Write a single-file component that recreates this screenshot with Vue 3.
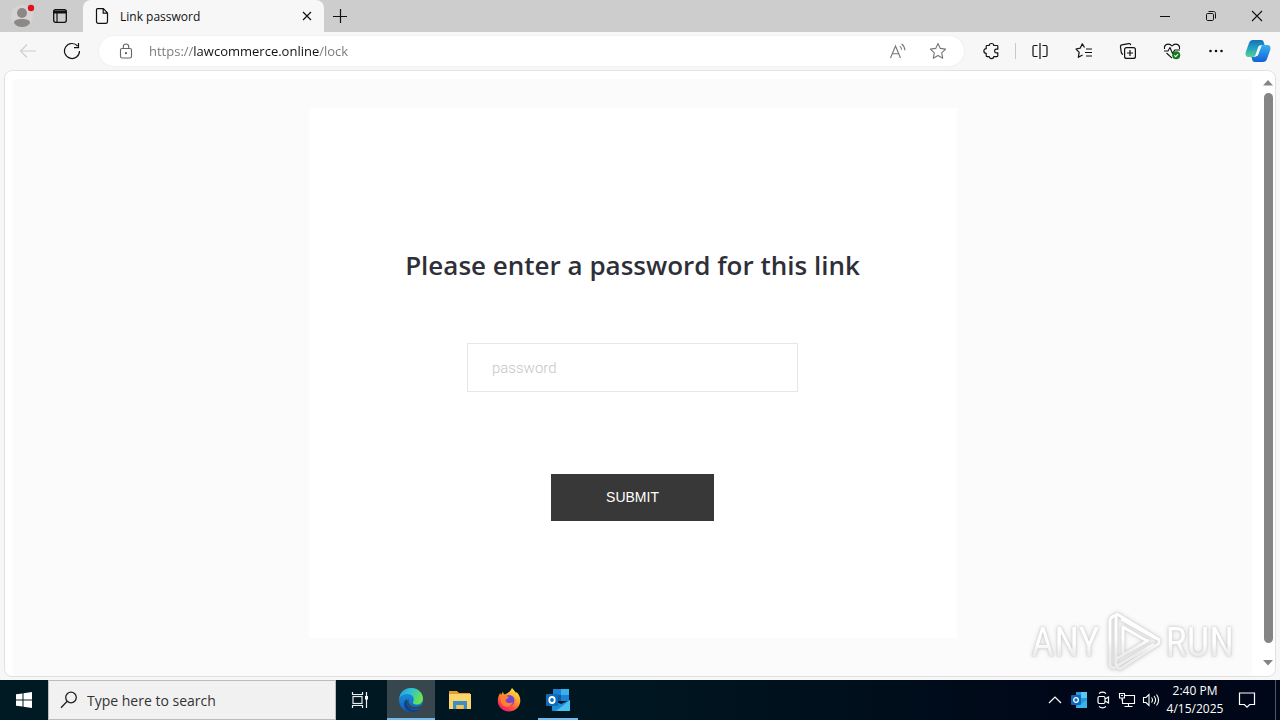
<template>
    <div class="desktop">
        <div class="browser">
            <header class="tab-strip">
                <button class="profile" aria-label="Profile">
                    <svg width="32" height="28" viewBox="0 0 32 28">
                        <circle cx="16" cy="14" r="11" fill="#d6d4d3" />
                        <circle cx="16" cy="11" r="5" fill="#8b8887" />
                        <path d="M8 21c0-3 3-4 8-4s8 1 8 4c-2 3-5 4-8 4s-6-1-8-4z" fill="#8b8887" />
                        <circle cx="25" cy="6" r="3.2" fill="#e0101c" />
                    </svg>
                </button>
                <button class="tab-actions" aria-label="Tab actions menu">
                    <svg width="16" height="16" viewBox="0 0 16 16">
                        <rect x="1.7" y="1.7" width="12.6" height="12.6" rx="2" fill="none" stroke="#111" stroke-width="1.3" />
                        <path d="M1.5 2.5h13v3h-13z" fill="#111" />
                        <path d="M5 5v9" stroke="#111" stroke-width="1.2" />
                    </svg>
                </button>
                <div class="tab">
                    <svg class="tab-icon" width="16" height="18" viewBox="0 0 16 18">
                        <path d="M3.5 1.6h5.8l4.2 4.3v8.600c0 1.100-.7 1.900-1.800 1.900H4.300c-1.100 0-1.800-.8-1.800-1.900V2.600c0-.6.4-1 1-1zM9.200 1.800v4.300h4.200" fill="none" stroke="#111" stroke-width="1.2" />
                    </svg>
                    <span class="tab-title">Link password</span>
                    <button class="tab-close" aria-label="Close tab">
                        <svg width="10" height="10" viewBox="0 0 10 10"><path d="M1 1l8 8M9 1L1 9" stroke="#111" stroke-width="1.2" /></svg>
                    </button>
                </div>
                <button class="new-tab" aria-label="New tab">
                    <svg width="16" height="16" viewBox="0 0 16 16"><path d="M8.5 1v14M1 8.500h14" stroke="#111" stroke-width="1.2" /></svg>
                </button>
                <div class="window-buttons">
                    <button aria-label="Minimize">
                        <svg width="12" height="12" viewBox="0 0 12 12"><path d="M1 6.500h10" stroke="#111" /></svg>
                    </button>
                    <button aria-label="Restore">
                        <svg width="12" height="12" viewBox="0 0 12 12" fill="none" stroke="#111">
                            <rect x="1.5" y="3.5" width="7" height="7" rx="1.2" />
                            <path d="M3.500 1.500h5c1.300 0 2 .7 2 2v5" />
                        </svg>
                    </button>
                    <button aria-label="Close">
                        <svg width="12" height="12" viewBox="0 0 12 12"><path d="M1 1l10 10M11 1L1 11" stroke="#111" stroke-width="1.1" /></svg>
                    </button>
                </div>
            </header>

            <nav class="toolbar">
                <button class="tool" aria-label="Back" disabled>
                    <svg width="18" height="16" viewBox="0 0 18 16" fill="none" stroke="#cdcdcd" stroke-width="1.1"><path d="M17 8H2M8 1.500L1.500 8 8 14.500" /></svg>
                </button>
                <button class="tool" aria-label="Refresh">
                    <svg width="18" height="18" viewBox="0 0 18 18" fill="none" stroke="#111" stroke-width="1.2">
                        <path d="M16.500 9A7.500 7.500 0 1 1 14.600 4M15.500 1v4.600H11" />
                    </svg>
                </button>
                <div class="address-bar">
                    <svg class="lock" width="14" height="16" viewBox="0 0 14 16" fill="none" stroke="#666" stroke-width="1.1">
                        <rect x="1.5" y="5.5" width="11" height="9.5" rx="1.6" />
                        <path d="M4.300 5.500V3.700a2.700 2.700 0 0 1 5.400 0v1.800" />
                        <circle cx="7" cy="10.2" r=".6" fill="#666" />
                    </svg>
                    <input v-model="address" class="address" type="text" aria-label="Address" spellcheck="false">
                    <button class="address-tool" aria-label="Read aloud">
                        <svg width="18" height="16" viewBox="0 0 18 16" fill="none" stroke="#767676" stroke-width="1.1">
                            <path d="M1.500 15L6.500 3l5 12M3.300 10.800h6.400M10.800 3.200c1.200 1 1.700 2 1.800 3.400M12.600 1c2.200 1.600 3.200 3.600 3.300 6.200" />
                        </svg>
                    </button>
                    <button class="address-tool" aria-label="Add to favorites">
                        <svg width="18" height="18" viewBox="0 0 18 18" fill="none" stroke="#767676" stroke-width="1.1" stroke-linejoin="round">
                            <path d="M9 1.500l2.300 4.900 5.300.7-3.900 3.700 1 5.400L9 13.600l-4.700 2.600 1-5.400L1.400 7.100l5.300-.7z" />
                        </svg>
                    </button>
                </div>
                <button class="tool" aria-label="Extensions">
                    <svg width="18" height="18" viewBox="0 0 18 18" fill="none" stroke="#111" stroke-width="1.2" stroke-linejoin="round">
                        <path d="M5 3.500h2.200C7.200.8 11.800.8 11.800 3.500H15c.5 0 .8.3.8.8v2.900h-1.500c-2.300 0-2.300 3.600 0 3.600h1.500v3c0 .5-.3.800-.8.800h-3.200c0 2.600-4.600 2.600-4.600 0H5c-.5 0-.8-.3-.8-.8v-2.500c-3.100 0-3.100-4.600 0-4.600V4.300c0-.5.3-.8.8-.8z" />
                    </svg>
                </button>
                <span class="divider"></span>
                <button class="tool" aria-label="Split screen">
                    <svg width="18" height="18" viewBox="0 0 18 18" fill="none" stroke="#111" stroke-width="1.2">
                        <path d="M6.500 3.500H3.200c-.8 0-1.200.4-1.200 1.200v8.600c0 .8.4 1.200 1.200 1.200h3.300M11.500 3.500h3.300c.8 0 1.200.4 1.200 1.200v8.600c0 .8-.4 1.200-1.200 1.200h-3.300M9 1v16" />
                    </svg>
                </button>
                <button class="tool" aria-label="Favorites">
                    <svg width="18" height="18" viewBox="0 0 18 18" fill="none" stroke="#111" stroke-width="1.2" stroke-linejoin="round">
                        <path d="M9.500 5.500L7.300 1.800 5.200 6.200 1 7l3.200 3.300-.9 5L7.600 13M11 7h6M10 10.500h7M11 14h6" />
                    </svg>
                </button>
                <button class="tool" aria-label="Collections">
                    <svg width="18" height="18" viewBox="0 0 18 18" fill="none" stroke="#111" stroke-width="1.2">
                        <path d="M4 12.500C2.800 12 2.600 11.500 2.300 10.500L1.500 5c-.2-1.200.3-2 1.500-2.200L9.500 1.600c1.200-.2 2 .3 2.200 1.500" />
                        <rect x="5.6" y="5.6" width="10.8" height="10.8" rx="2" />
                        <path d="M11 8v6M8 11h6" />
                    </svg>
                </button>
                <button class="tool" aria-label="Browser essentials">
                    <svg width="18" height="18" viewBox="0 0 18 18" fill="none" stroke="#111" stroke-width="1.1" stroke-linejoin="round">
                        <path d="M1.500 7C.8 2 6 .7 9 4c3-3.300 8.200-2 7.500 3M1 9h4l2-3.500 2.500 6L11.700 8H17M3.500 11L9 16.200" />
                        <circle cx="13.2" cy="13.2" r="4" fill="#137a1b" stroke="none" />
                        <path d="M11.300 13.300l1.400 1.400 2.400-2.700" stroke="#fff" />
                    </svg>
                </button>
                <button class="tool" aria-label="Settings and more">
                    <svg width="16" height="4" viewBox="0 0 16 4" fill="#111"><circle cx="2.500" cy="2" r="1.300" /><circle cx="8" cy="2" r="1.300" /><circle cx="13.500" cy="2" r="1.300" /></svg>
                </button>
                <button class="tool copilot" aria-label="Copilot">
                    <svg width="26" height="24" viewBox="0 0 26 24">
                        <defs>
                            <linearGradient id="copA" x1="0" y1="0" x2="0" y2="1">
                                <stop offset="0" stop-color="#1a6fb8" />
                                <stop offset=".5" stop-color="#20a5c4" />
                                <stop offset="1" stop-color="#5cd08c" />
                            </linearGradient>
                            <linearGradient id="copB" x1="0" y1="0" x2="0" y2="1">
                                <stop offset="0" stop-color="#35b3ee" />
                                <stop offset="1" stop-color="#1460d8" />
                            </linearGradient>
                        </defs>
                        <path d="M8 1h8c2 0 2.500 1 3 3l.6 2h-3c-2 0-3 .8-3.600 2.700L10.500 16c-.4 1.300-1.200 2-2.500 2H4c-3 0-4-2-3.200-5L4 4c.7-2 2-3 4-3z" fill="url(#copA)" />
                        <path d="M18 23h-8c-2 0-2.500-1-3-3l-.6-2H9c2 0 3-.8 3.600-2.700L15.500 8c.4-1.300 1.200-2 2.500-2h4c3 0 4 2 3.200 5L22 20c-.7 2-2 3-4 3z" fill="url(#copB)" />
                        <path d="M13.500 8.200c.3-.9.900-1.200 1.800-1.200h1.200l-3.300 8.800c-.3.900-.9 1.200-1.800 1.200h-1z" fill="#f7f7f7" />
                    </svg>
                </button>
            </nav>

            <main class="viewport">
                <div class="page">
                    <form class="lock-card" @submit.prevent>
                        <h1>Please enter a password for this link</h1>
                        <input v-model="password" class="password" type="password" placeholder="password" aria-label="password">
                        <button class="submit" type="submit">SUBMIT</button>
                    </form>
                </div>
                <div class="scrollbar">
                    <svg width="10" height="6" viewBox="0 0 10 6"><path d="M5 0l5 5.500H0z" fill="#858585" /></svg>
                    <div class="scroll-track"><div class="scroll-thumb"></div></div>
                    <svg width="10" height="6" viewBox="0 0 10 6"><path d="M5 5.500L0 0h10z" fill="#858585" /></svg>
                </div>
                <div class="watermark">
                    <span>ANY</span>
                    <svg width="60" height="64" viewBox="0 0 60 64" fill="none" stroke-linejoin="round">
                        <defs>
                            <linearGradient id="markFill" gradientUnits="userSpaceOnUse" x1="0" y1="28" x2="0" y2="44">
                                <stop offset="0" stop-color="#fff" />
                                <stop offset="1" stop-color="#ececec" />
                            </linearGradient>
                        </defs>
                        <g stroke="url(#markFill)" stroke-width="3">
                            <path d="M14 4L56 29.500v4L17 59l-4-2V6z" />
                            <path d="M20 17l24 14-24 14zM13 49l33-19M14 56l37-22M18 9l36 20M7 9v47l5 3M7 9l5-4" />
                        </g>
                    </svg>
                    <span>RUN</span>
                </div>
            </main>
        </div>

        <footer class="taskbar">
            <button class="start" aria-label="Start">
                <svg width="16" height="16" viewBox="0 0 16 16" fill="#fff"><path d="M0 2.300l6.500-.9v6.100H0zM7.500 1.200L16 0v7.500H7.500zM0 8.500h6.500v6.100L0 13.700zM7.500 8.500H16V16l-8.500-1.200z" /></svg>
            </button>
            <label class="search">
                <svg width="18" height="18" viewBox="0 0 18 18" fill="none" stroke="#222" stroke-width="1.3"><circle cx="11" cy="6.5" r="5.3" /><path d="M7.200 10.300L1 16.800" /></svg>
                <input v-model="query" type="text" placeholder="Type here to search" aria-label="Search">
            </label>
            <button class="task-view" aria-label="Task view">
                <svg width="18" height="16" viewBox="0 0 18 16" fill="none" stroke="#e8edef" stroke-width="1.2">
                    <rect x="2" y="4.5" width="9" height="7" /><path d="M1.500 0v2.500h10V0M1.500 16v-2.500h10V16M15.500 0v16" /><path d="M14 4h3v3.500h-3z" fill="#fff" stroke="none" />
                </svg>
            </button>
            <div class="apps">
                <button class="app active" aria-label="Microsoft Edge">
                    <svg width="26" height="26" viewBox="0 0 26 26">
                        <defs>
                            <linearGradient id="edgeTop" x1="0" y1="0" x2="1" y2=".4">
                                <stop offset="0" stop-color="#219be0" />
                                <stop offset=".5" stop-color="#2fc3cf" />
                                <stop offset="1" stop-color="#6be24f" />
                            </linearGradient>
                            <linearGradient id="edgeLow" x1="0" y1="0" x2="0" y2="1">
                                <stop offset="0" stop-color="#1b9be3" />
                                <stop offset="1" stop-color="#125fb8" />
                            </linearGradient>
                        </defs>
                        <circle cx="13" cy="13" r="12" fill="url(#edgeLow)" />
                        <path d="M1.200 11C2.500 4.500 7.500 1 13 1c7 0 12 5 12 10.500 0 4-3 6-6 6-3.500 0-4.500-1.300-4-2.500 2.500-4-1-8-5.500-8C5.500 7 2.500 9 1.200 11z" fill="url(#edgeTop)" />
                        <path d="M9 12c-1.500 6 3 11 9 11 2 0 3.500-1 4.800-2-1.300 2.200-5 4.500-9 4C8.500 24.500 6 20.500 6 17c0-2.200 1.200-4 3-5z" fill="#0d4290" />
                        <path d="M11 11.500c-1.800 4 1 8.500 6 8.500 3 0 5.500-1 7-2.500l-1.500 3.300c-5 3-14 1.200-13.500-7z" fill="#37474d" />
                    </svg>
                </button>
                <button class="app" aria-label="File Explorer">
                    <svg width="22" height="20" viewBox="0 0 22 20">
                        <path d="M0 1h8l2 2h11v6H0z" fill="#e2a02b" />
                        <path d="M0 4h22v15H0z" fill="#fbd56b" />
                        <path d="M4 11h14v8h-3.500v-4h-7v4H4z" fill="#3c8ec6" />
                        <path d="M7.500 15h7v4h-7z" fill="#f1c451" />
                    </svg>
                </button>
                <button class="app" aria-label="Firefox">
                    <svg width="24" height="24" viewBox="0 0 24 24">
                        <defs>
                            <linearGradient id="fox" x1=".8" y1="0" x2=".2" y2="1">
                                <stop offset="0" stop-color="#fff04a" />
                                <stop offset=".45" stop-color="#ff9327" />
                                <stop offset=".75" stop-color="#ff4148" />
                                <stop offset="1" stop-color="#e3167c" />
                            </linearGradient>
                        </defs>
                        <path d="M15 0c2 2 3 3.500 4 5l.5-1c2 2 4 5 3.800 9C23 19 18 23.500 12 23.500S1 19 .8 13c0-3.500 1-6 2.500-8l.7 2 2-3.500c.2 1.500.5 2.300 1.500 3C10 6 13 4 15 0z" fill="url(#fox)" />
                        <circle cx="12" cy="12.5" r="5.5" fill="#7444d6" />
                        <path d="M4 8c3-2 6 0 8 1-1 2-3 1.500-3.500 3.500 1 3 5.500 3.500 7.500 1-1 5-6 6.500-10 4-2-2-3-6-2-9.500z" fill="#ff812f" />
                    </svg>
                </button>
                <button class="app running" aria-label="Outlook">
                    <svg width="24" height="22" viewBox="0 0 24 22">
                        <path d="M7 0h16v12H7z" fill="#1c81d3" />
                        <path d="M15 0h8v6h-8z" fill="#35b1ee" />
                        <path d="M7 6h8v6H7z" fill="#0a5aa8" />
                        <path d="M6 11l9 4 9-4v10c0 .6-.4 1-1 1H7c-.6 0-1-.4-1-1z" fill="#1a8cd8" />
                        <path d="M24 11v11H10z" fill="#4bc0ef" />
                        <rect y="5" width="12" height="12" rx="1" fill="#0f6cbd" />
                        <ellipse cx="6" cy="11" rx="2.7" ry="3" fill="none" stroke="#fff" stroke-width="1.8" />
                    </svg>
                </button>
            </div>
            <div class="tray">
                <button class="tray-item" aria-label="Show hidden icons">
                    <svg width="14" height="8" viewBox="0 0 14 8" fill="none" stroke="#fff" stroke-width="1.2"><path d="M1 7l6-6 6 6" /></svg>
                </button>
                <button class="tray-item" aria-label="Outlook notifications">
                    <svg width="16" height="16" viewBox="0 0 16 16">
                        <path d="M5 0h11v15H5z" fill="#2499dd" /><path d="M10 0h6v6h-6z" fill="#58c9f5" /><path d="M5 15l11-7v8H5z" fill="#39b3ec" />
                        <rect y="3" width="10" height="10" rx="1" fill="#0c68b8" /><circle cx="5" cy="8" r="2.3" fill="none" stroke="#fff" stroke-width="1.3" />
                    </svg>
                </button>
                <button class="tray-item" aria-label="Meet now">
                    <svg width="14" height="18" viewBox="0 0 14 18" fill="none" stroke="#fff" stroke-width="1.2"><rect x="2" y="5.5" width="7" height="7" rx="1.5" /><path d="M9 8l3.500-2v6L9 10M3 2.500c2-1.500 5-1.500 7 0M3 15.500c2 1.500 5 1.500 7 0" /></svg>
                </button>
                <button class="tray-item" aria-label="Network">
                    <svg width="18" height="16" viewBox="0 0 18 16" fill="none" stroke="#fff" stroke-width="1.1"><path d="M7 3.500h9.500v8H4.500V7M10.500 11.500v3M6.500 14.500h8M1.500 1.500h5V6h-5zM4 6v2.500M3 3.500h2" /></svg>
                </button>
                <button class="tray-item" aria-label="Volume">
                    <svg width="18" height="16" viewBox="0 0 18 16" fill="none" stroke="#fff" stroke-width="1.1"><path d="M1.500 5.500H4L7 2.500v11l-3-3H1.500zM9.500 5.500c1.200 1.500 1.200 3.500 0 5M12 4c2 2.500 2 5.500 0 8M14.500 2.500c2.500 3.300 2.500 7.700 0 11" /></svg>
                </button>
                <div class="clock">
                    <time>2:40 PM</time>
                    <time>4/15/2025</time>
                </div>
                <button class="notifications" aria-label="Notifications">
                    <svg width="18" height="18" viewBox="0 0 18 18" fill="none" stroke="#fff" stroke-width="1.2"><path d="M1.500 2h15v11.500h-4.800L9 16.200l-2.700-2.700H1.500z" /></svg>
                </button>
                <button class="show-desktop" aria-label="Show desktop"></button>
            </div>
        </footer>
    </div>
</template>

<script setup>
import { ref } from 'vue';

const address = ref('https://lawcommerce.online/lock');
const password = ref('');
const query = ref('');
</script>

<style>
body {
    margin: 0;
}
</style>

<style scoped>
* {
    box-sizing: border-box;
}

.desktop {
    display: flex;
    flex-direction: column;
    min-height: 100vh;
    font-family: "Open Sans", "Noto Sans", sans-serif;
    font-size: 12px;
    color: #111;
}

button {
    display: flex;
    align-items: center;
    justify-content: center;
    padding: 0;
    border: none;
    background: none;
    cursor: pointer;
}

svg {
    flex: none;
    display: block;
}

.browser {
    flex: 1;
    display: flex;
    flex-direction: column;
    background: #f7f7f7;
}

/* Tab strip */
.tab-strip {
    display: flex;
    height: 32px;
    background: #cdcdcd;
}

.profile {
    width: 44px;
}

.tab-actions {
    width: 32px;
}

.tab {
    display: flex;
    align-items: center;
    width: 241px;
    margin-left: 7px;
    padding: 0 8px 0 11px;
    border-radius: 8px 8px 0 0;
    background: #f7f7f7;
}

.tab-title {
    flex: 1;
    margin-left: 10px;
}

.tab-close {
    width: 18px;
    height: 20px;
}

.new-tab {
    width: 32px;
}

.window-buttons {
    display: flex;
    margin-left: auto;
}

.window-buttons button {
    width: 46px;
}

/* Toolbar */
.toolbar {
    display: flex;
    align-items: center;
    height: 38px;
    padding: 0 2px 0 6px;
}

.tool {
    width: 44px;
    height: 30px;
}

.copilot {
    width: 40px;
}

.divider {
    width: 1px;
    height: 16px;
    margin: 0 2px;
    background: #c8c8c8;
}

.address-bar {
    flex: 1;
    display: flex;
    align-items: center;
    height: 30px;
    margin: 0 5px;
    padding: 0 6px 0 20px;
    border-radius: 15px;
    background: #fff;
    box-shadow: 0 0 2px #e4e4e4;
}

/* Host name is dark, scheme and path are dimmed */
.address {
    flex: 1;
    min-width: 0;
    margin-left: 16px;
    padding: 0;
    border: none;
    outline: none;
    font: 13px/20px "Open Sans", "Noto Sans", sans-serif;
    color: transparent;
    background: linear-gradient(to right, #767676 44px, #111 44px, #111 170px, #767676 170px);
    background-clip: text;
    -webkit-background-clip: text;
}

.address-tool {
    width: 40px;
    height: 28px;
}

/* Page */
.viewport {
    position: relative;
    flex: 1;
    display: flex;
    margin: 0 4px 3px;
    border: 1px solid #e2e2e2;
    border-radius: 8px;
    background: #fff;
    overflow: hidden;
}

.page {
    flex: 1;
    display: flex;
    justify-content: center;
    align-items: flex-start;
    margin: 8px 9px 0 8px;
    padding: 29px 24px 38px;
    background: #fbfbfb;
}

.lock-card {
    display: flex;
    flex-direction: column;
    align-items: center;
    width: 100%;
    max-width: 648px;
    padding: 137px 24px 117px;
    background: #fff;
}

h1 {
    margin: 0 0 58px;
    font-size: 26px;
    font-weight: 600;
    line-height: 40px;
    text-align: center;
    color: #2e2f38;
}

.password {
    width: 100%;
    max-width: 331px;
    height: 49px;
    margin-bottom: 82px;
    padding: 0 24px;
    border: 1px solid #e6e6e6;
    outline: none;
    font: 300 15px "Roboto", sans-serif;
    color: #383838;
    background: #fff;
}

.password::placeholder {
    color: #c6c6c6;
}

.submit {
    width: 163px;
    height: 47px;
    padding-bottom: 1px;
    font: 14px "Liberation Sans", Arial, sans-serif;
    color: #fff;
    background: #383838;
}

.scrollbar {
    display: flex;
    flex-direction: column;
    align-items: center;
    width: 14px;
    padding: 9px 0 10px;
}

.scroll-track {
    flex: 1;
    width: 9px;
    margin: 7px 0 0;
}

.scroll-thumb {
    width: 9px;
    height: 97%;
    border-radius: 5px;
    background: #858585;
}

.watermark {
    position: absolute;
    right: 41px;
    bottom: 2px;
    display: flex;
    align-items: center;
    gap: 3px;
    font: 40px "Liberation Sans Narrow", "Roboto Condensed", "Liberation Sans", sans-serif;
    pointer-events: none;
    filter: drop-shadow(0 0 1px #c4c4c4) drop-shadow(0 0 2px #dcdcdc);
}

.watermark span {
    color: transparent;
    background: linear-gradient(#fff 50%, #ececec 75%);
    background-clip: text;
    -webkit-background-clip: text;
}

/* Taskbar */
.taskbar {
    display: flex;
    height: 40px;
    background: linear-gradient(to right, #001a23, #001620 50%, #000718 85%);
    color: #fff;
}

.start,
.task-view {
    width: 48px;
}

.search {
    display: flex;
    align-items: center;
    gap: 9px;
    width: 288px;
    padding: 0 11px;
    border: 1px solid #bcbcbc;
    background: #f1f1f1;
}

.search input {
    flex: 1;
    min-width: 0;
    padding: 0;
    border: none;
    outline: none;
    font: 14px "Open Sans", "Noto Sans", sans-serif;
    color: #222;
    background: none;
}

.search input::placeholder {
    color: #333;
}

.apps {
    display: flex;
    gap: 1px;
    margin-left: 3px;
}

.app {
    position: relative;
    width: 48px;
}

.active {
    background: #37474d;
}

.active::after,
.running::after {
    content: "";
    position: absolute;
    bottom: 0;
    left: 0;
    right: 0;
    height: 2px;
    background: #76b9ed;
}

.running::after {
    left: 4px;
    right: 4px;
}

.tray {
    display: flex;
    margin-left: auto;
}

.tray-item {
    width: 24px;
}

.clock {
    display: flex;
    flex-direction: column;
    align-items: center;
    justify-content: center;
    width: 64px;
    line-height: 18px;
}

.notifications {
    width: 40px;
}

.show-desktop {
    width: 5px;
    margin-left: 8px;
    border-left: 1px solid #4d5662;
}
</style>
